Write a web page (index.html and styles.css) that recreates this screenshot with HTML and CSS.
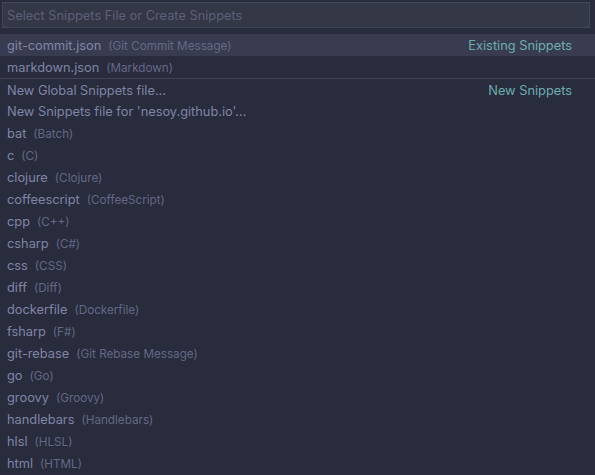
FILE: index.html
```html
<!DOCTYPE html>
<html>
<head>
<meta charset="utf-8">
<link rel="stylesheet" href="styles.css">
</head>
<body>
<div class="widget">
  <div class="input-wrap"><div class="input">Select Snippets File or Create Snippets</div></div>
  <ul class="list">
    <li class="row active"><span class="label">git-commit.json</span><span class="desc">(Git Commit Message)</span><span class="group">Existing Snippets</span></li>
    <li class="row"><span class="label">markdown.json</span><span class="desc">(Markdown)</span></li>
    <li class="row sep"><span class="label">New Global Snippets file...</span><span class="group">New Snippets</span></li>
    <li class="row"><span class="label">New Snippets file for 'nesoy.github.io'...</span></li>
    <li class="row"><span class="label">bat</span><span class="desc">(Batch)</span></li>
    <li class="row"><span class="label">c</span><span class="desc">(C)</span></li>
    <li class="row"><span class="label">clojure</span><span class="desc">(Clojure)</span></li>
    <li class="row"><span class="label">coffeescript</span><span class="desc">(CoffeeScript)</span></li>
    <li class="row"><span class="label">cpp</span><span class="desc">(C++)</span></li>
    <li class="row"><span class="label">csharp</span><span class="desc">(C#)</span></li>
    <li class="row"><span class="label">css</span><span class="desc">(CSS)</span></li>
    <li class="row"><span class="label">diff</span><span class="desc">(Diff)</span></li>
    <li class="row"><span class="label">dockerfile</span><span class="desc">(Dockerfile)</span></li>
    <li class="row"><span class="label">fsharp</span><span class="desc">(F#)</span></li>
    <li class="row"><span class="label">git-rebase</span><span class="desc">(Git Rebase Message)</span></li>
    <li class="row"><span class="label">go</span><span class="desc">(Go)</span></li>
    <li class="row"><span class="label">groovy</span><span class="desc">(Groovy)</span></li>
    <li class="row"><span class="label">handlebars</span><span class="desc">(Handlebars)</span></li>
    <li class="row"><span class="label">hlsl</span><span class="desc">(HLSL)</span></li>
    <li class="row"><span class="label">html</span><span class="desc">(HTML)</span></li>
  </ul>
</div>
</body>
</html>
```
FILE: styles.css
```css
html, body {
  margin: 0;
  padding: 0;
  background: #292c3c;
  height: 100%;
  overflow: hidden;
}
.widget {
  font-family: Inter, "Noto Sans", sans-serif;
  font-size: 12.8px;
  color: #8085a7;
}
.input-wrap {
  padding: 2px 5px 0 2px;
  height: 32px;
  box-sizing: border-box;
}
.input {
  height: 26px;
  box-sizing: border-box;
  border: 1px solid #42465a;
  background: #343746;
  color: #5d6079;
  padding: 1px 0 0 4px;
  line-height: 23px;
}
.list {
  list-style: none;
  margin: 0;
  padding: 0;
  margin-top: 2px;
}
.row {
  display: flex;
  align-items: center;
  height: 22px;
  padding: 1px 23px 0 7px;
  box-sizing: border-box;
  white-space: nowrap;
}
.row.active {
  background: #393c50;
}
.row.sep {
  border-top: 1px solid #414456;
}
.label {
  color: #8085a7;
}
.desc {
  margin-left: 7px;
  font-size: 11.7px;
  color: #646886;
}
.group {
  margin-left: auto;
  color: #6caeb1;
}
```
